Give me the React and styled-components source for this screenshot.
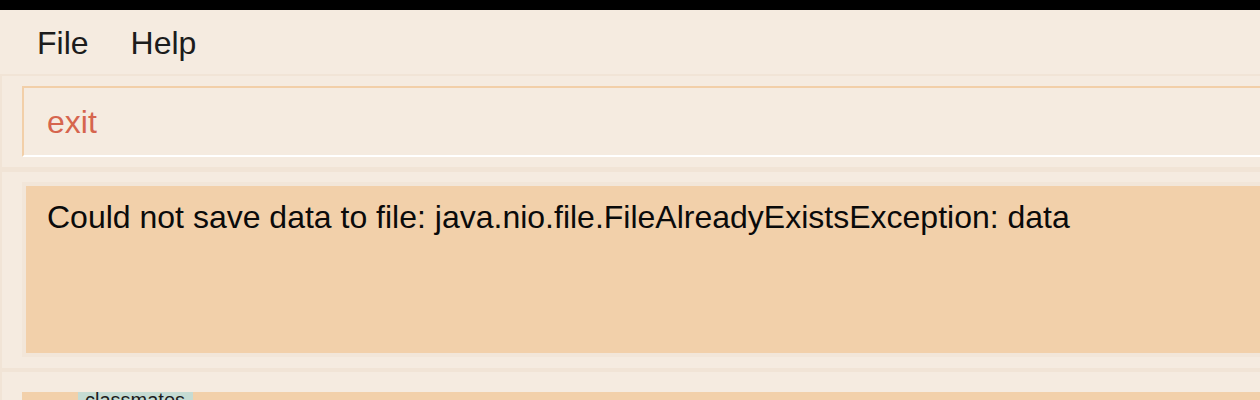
import React from 'react';
import styled, { createGlobalStyle } from 'styled-components';

const GlobalStyle = createGlobalStyle`
  html, body {
    margin: 0;
    height: 100%;
    overflow: hidden;
  }
  body {
    background: #f5ebe0;
    font-family: "Liberation Sans", Arial, sans-serif;
  }
  #root {
    height: 100%;
  }
`;

const Window = styled.div`
  display: flex;
  flex-direction: column;
  height: 100%;
  background: #f5ebe0;
`;

const TitleStrip = styled.div`
  height: 10px;
  flex-shrink: 0;
  background: #000;
`;

const MenuBar = styled.nav`
  display: flex;
  align-items: flex-start;
  gap: 42px;
  height: 64px;
  flex-shrink: 0;
  box-sizing: border-box;
  padding: 15px 0 0 37px;
`;

const MenuItem = styled.span`
  font-size: 32px;
  color: #1c1c1c;
`;

const Pane = styled.section`
  flex-shrink: 0;
  box-sizing: border-box;
  border-top: ${p => p.$band}px solid #f1e4d6;
  border-left: 2px solid #f1e4d6;
  padding: ${p => p.$top}px 0 ${p => p.$bottom}px 20px;
  ${p => p.$grow && 'flex: 1; min-height: 0; overflow: hidden;'}
`;

const CommandField = styled.div`
  height: 71px;
  box-sizing: border-box;
  border-top: 2px solid #f2cfa8;
  border-left: 2px solid #f2cfa8;
  border-bottom: 2px solid #ffffff;
  padding: 16px 0 0 23px;
  font-size: 32px;
  color: #d6654e;
`;

const ResultBox = styled.div`
  height: 175px;
  box-sizing: border-box;
  border: 4px solid #f2e6d9;
  border-right: none;
  background: #f2d0aa;
  padding: 13px 0 0 21px;
  font-size: 32px;
  color: #0a0a0a;
  white-space: nowrap;
`;

const PersonCard = styled.div`
  height: 100%;
  background: #f2d0aa;
  padding-left: 56px;
  overflow: hidden;
`;

const Tags = styled.div`
  display: flex;
  gap: 6px;
  margin-top: -2px;
`;

const Tag = styled.span`
  background: #c5dbd3;
  color: #1c1c1c;
  font-size: 20px;
  line-height: 1;
  padding: 0 8px 0 7px;
  height: 20px;
`;

export default function App() {
  return (
    <>
      <GlobalStyle />
      <Window>
        <TitleStrip />
        <MenuBar>
          <MenuItem>File</MenuItem>
          <MenuItem>Help</MenuItem>
        </MenuBar>
        <Pane $band={2} $top={10} $bottom={10}>
          <CommandField>exit</CommandField>
        </Pane>
        <Pane $band={5} $top={10} $bottom={11}>
          <ResultBox>
            Could not save data to file: java.nio.file.FileAlreadyExistsException: data
          </ResultBox>
        </Pane>
        <Pane $band={4} $top={20} $bottom={0} $grow>
          <PersonCard>
            <Tags>
              <Tag>classmates</Tag>
            </Tags>
          </PersonCard>
        </Pane>
      </Window>
    </>
  );
}
